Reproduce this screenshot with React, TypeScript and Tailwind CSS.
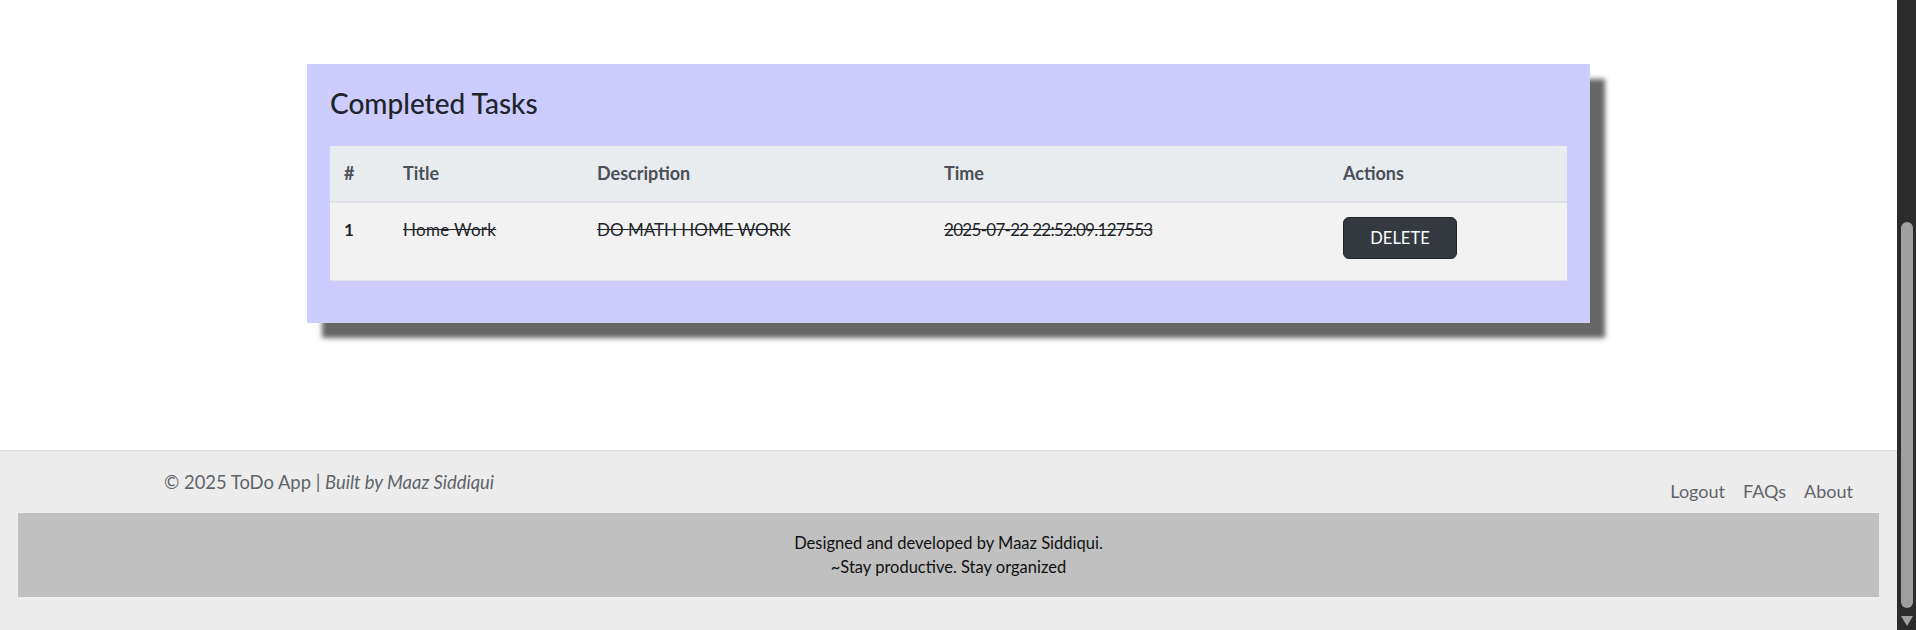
import React from 'react'

const font = { fontFamily: 'Lato, "Noto Sans", sans-serif' }

const tasks = [
  { id: 1, title: 'Home Work', desc: 'DO MATH HOME WORK', time: '2025-07-22 22:52:09.127553' },
]

function CompletedCard() {
  return (
    <div className="mx-auto w-[1283px] bg-[#ccccff] px-[23px] pt-[23px] pb-[42px] shadow-[15px_15px_5px_#666]">
      <h3 className="mb-[25px] text-[28px] leading-[1.2] font-medium text-[#212529]">Completed Tasks</h3>
      <table className="w-full table-fixed border-collapse text-[17px] text-[#212529]">
        <colgroup>
          <col className="w-[59px]" />
          <col className="w-[194px]" />
          <col className="w-[347px]" />
          <col className="w-[399px]" />
          <col />
        </colgroup>
        <thead>
          <tr className="h-[56px] border-b-2 border-[#dee2e6] bg-[#e9ecef] text-left text-[18px] text-[#495057]">
            <th className="px-[14px] font-bold">#</th>
            <th className="px-[14px] font-bold">Title</th>
            <th className="px-[14px] font-bold">Description</th>
            <th className="px-[14px] font-bold">Time</th>
            <th className="px-[14px] font-bold">Actions</th>
          </tr>
        </thead>
        <tbody>
          {tasks.map((t) => (
            <tr key={t.id} className="h-[79px] border-b border-[#dee2e6] bg-[#f2f2f2] align-top leading-6">
              <td className="px-[14px] pt-[15px] font-bold">{t.id}</td>
              <td className="px-[14px] pt-[15px] tracking-[0.3px] line-through">{t.title}</td>
              <td className="px-[14px] pt-[15px] line-through">{t.desc}</td>
              <td className="px-[14px] pt-[15px] tracking-[-0.7px] line-through">{t.time}</td>
              <td className="px-[14px] pt-[14px]">
                <button className="h-[42px] w-[114px] rounded-[6px] border border-[#212529] bg-[#343a40] text-[16.5px] text-white">
                  DELETE
                </button>
              </td>
            </tr>
          ))}
        </tbody>
      </table>
    </div>
  )
}

function Footer() {
  return (
    <footer className="h-[180px] border-t border-[#dcdcdc] bg-[#ececec]">
      <div className="flex items-start justify-between pr-[44px] pl-[164px]">
        <p className="pt-[19px] text-[18.4px] leading-6 text-[#5f646a]">
          © 2025 ToDo App | <em>Built by Maaz Siddiqui</em>
        </p>
        <nav className="flex gap-[18px] pt-[28px] text-[18px] leading-6 text-[#5f646a]">
          <a href="#">Logout</a>
          <a href="#">FAQs</a>
          <a href="#">About</a>
        </nav>
      </div>
      <div className="mx-[18px] mt-[10px] bg-[#c0c0c0] py-[18px] text-center text-[16.5px] leading-6 text-[#111]">
        <p>Designed and developed by Maaz Siddiqui.</p>
        <p>~Stay productive. Stay organized</p>
      </div>
    </footer>
  )
}

function Scrollbar() {
  return (
    <div className="flex w-[19px] shrink-0 flex-col items-center bg-[#2b2b2b]">
      <div className="flex-1" />
      <div className="h-[386px] w-[12px] rounded-full bg-[#9f9f9f]" />
      <div className="mt-[8px] mb-[4px] h-0 w-0 border-x-[6px] border-t-[10px] border-x-transparent border-t-[#9f9f9f]" />
    </div>
  )
}

export default function App() {
  return (
    <div className="flex h-[630px] w-full overflow-hidden bg-white" style={font}>
      <div className="flex flex-1 flex-col">
        <main className="flex-1 pt-[64px]">
          <CompletedCard />
        </main>
        <Footer />
      </div>
      <Scrollbar />
    </div>
  )
}
